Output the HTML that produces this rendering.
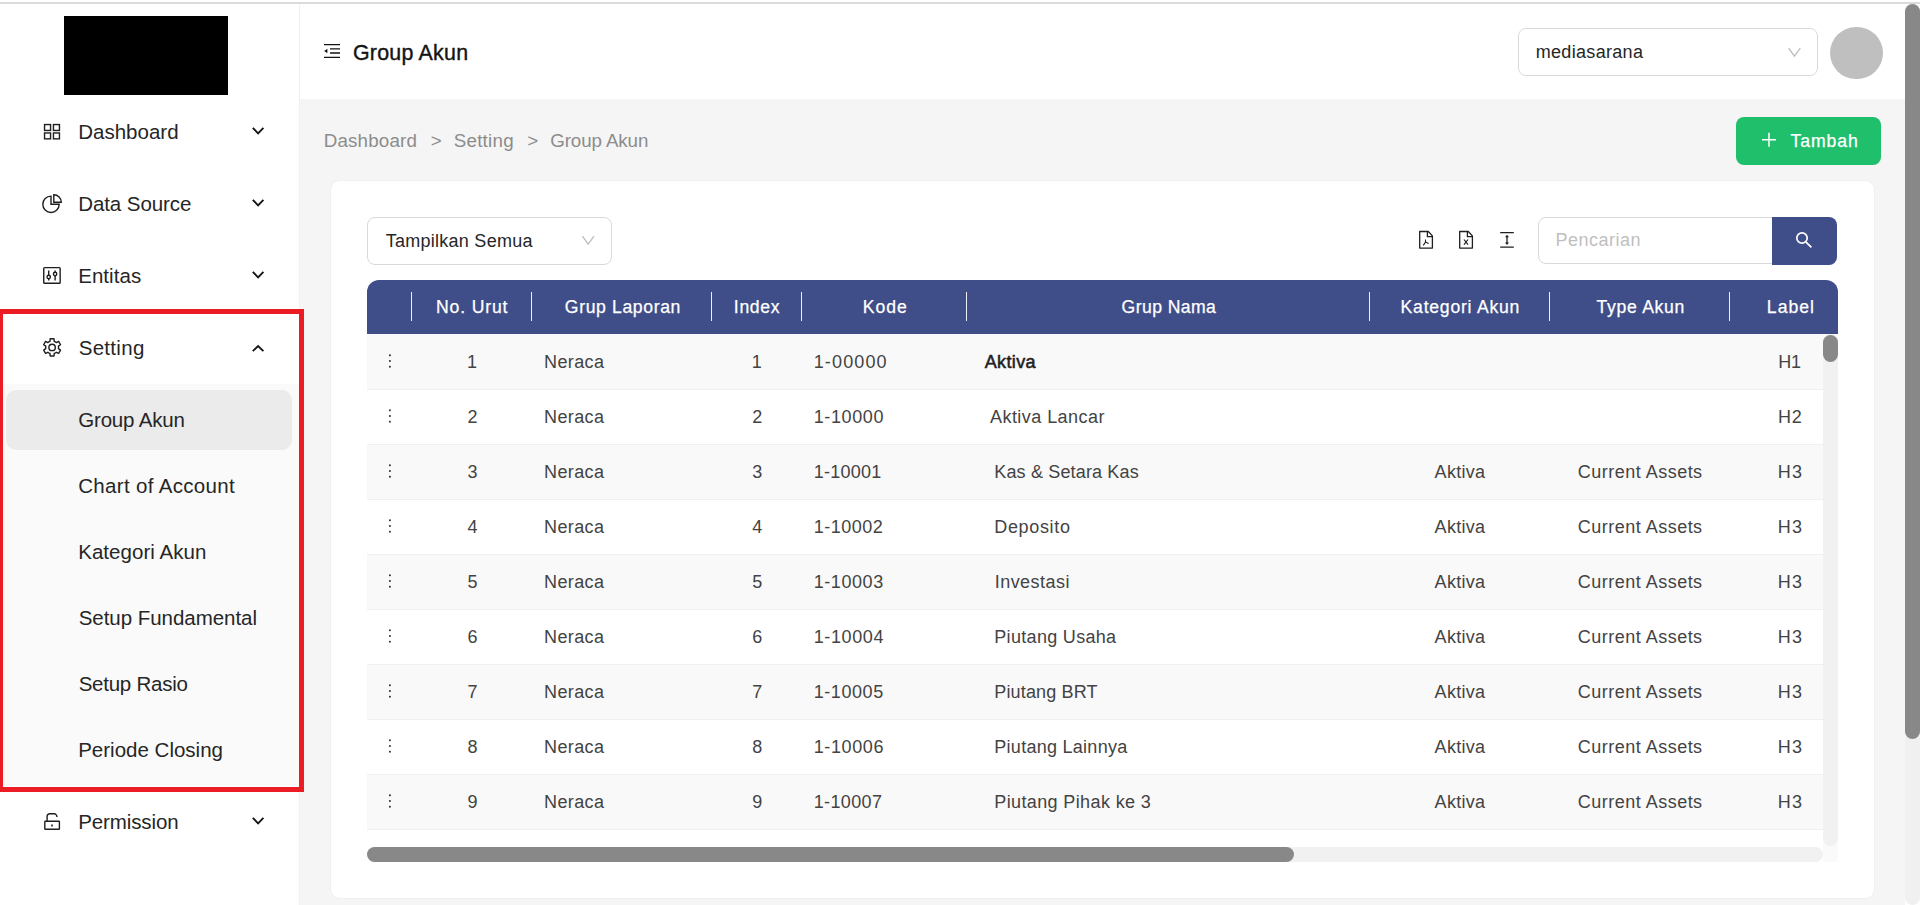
<!DOCTYPE html>
<html lang="id">
<head>
<meta charset="utf-8">
<title>Group Akun</title>
<style>
*{box-sizing:border-box;margin:0;padding:0}
html,body{width:1920px;height:905px;overflow:hidden}
body{background:#f5f5f5;font-family:"Liberation Sans",Arial,sans-serif;color:#1f1f1f;position:relative}
.abs{position:absolute}
.t{position:absolute;white-space:nowrap;line-height:1}
.c{transform:translateX(-50%)}
#topwhite{left:0;top:0;width:1920px;height:4px;background:#fff}
#topline{left:0;top:2px;width:1920px;height:2px;background:#dadcdc}
#sidebar{left:0;top:4px;width:300px;height:901px;background:#fff;border-right:1px solid #f0f0f0}
#header{left:300px;top:4px;width:1605px;height:95px;background:#fff}
#pscrollbg{left:1905px;top:4px;width:15px;height:901px;background:#fff}
#pscroll{left:1905px;top:4px;width:15px;height:901px;background:#f0f0f0;border-radius:7.5px}
#pthumb{left:1905px;top:4px;width:15px;height:735px;background:#888;border-radius:8px}
#logo{left:64px;top:16px;width:164px;height:78.6px;background:#000}
.mi{font-size:20px;color:#1f1f1f;left:78px}
#submenu{left:0;top:384px;width:299px;height:402px;background:#fafafa}
#active{left:6px;top:390px;width:286px;height:60px;background:#ebebeb;border-radius:10px}
#redbox{left:-2px;top:309px;width:306px;height:483px;border:5px solid #ec1c24}
svg{position:absolute;overflow:visible}
#card{left:330px;top:180px;width:1545px;height:719px;background:#fff;border-radius:10px;border:1px solid #f0f0f0}
</style>
</head>
<body>
<div class="abs" id="topwhite"></div>
<div class="abs" id="topline"></div>
<div class="abs" id="sidebar"></div>
<div class="abs" id="header"></div>
<div class="abs" id="pscrollbg"></div>
<div class="abs" id="pscroll"></div>
<div class="abs" id="pthumb"></div>
<div class="abs" id="logo"></div>
<div class="abs" id="submenu"></div>
<div class="abs" id="active"></div>
<svg class="abs" style="left:0;top:0" width="1920" height="905" viewBox="0 0 1920 905" fill="none" stroke="#1f1f1f" stroke-width="1.4"><rect x="44.55" y="124.55" width="6" height="5.9"/><rect x="53.45" y="124.55" width="6" height="5.9"/><rect x="44.55" y="132.95" width="6" height="5.9"/><rect x="53.45" y="132.95" width="6" height="5.9"/><path d="M51.0 196.1 A8.2 8.2 0 1 0 59.2 204.3 H51.0 Z"/><path d="M53.8 194.7 V202.2 H61.3 A7.5 7.5 0 0 0 53.8 194.7 Z"/><rect x="43.75" y="267.6" width="16.4" height="15.7" rx="0.8"/><path d="M48.7 270.4 V275.2 M48.7 278.8 V280.6 M55.1 270.4 V272.2 M55.1 275.8 V280.6"/><circle cx="48.7" cy="277" r="1.7"/><circle cx="55.1" cy="274" r="1.7"/><path d="M54.20 341.30L54.02 338.76L50.18 338.76L50.00 341.30A6.45 6.45 0 0 0 47.87 342.53L45.58 341.42L43.66 344.74L45.77 346.17A6.45 6.45 0 0 0 45.77 348.63L43.66 350.06L45.58 353.38L47.87 352.27A6.45 6.45 0 0 0 50.00 353.50L50.18 356.04L54.02 356.04L54.20 353.50A6.45 6.45 0 0 0 56.33 352.27L58.62 353.38L60.54 350.06L58.43 348.63A6.45 6.45 0 0 0 58.43 346.17L60.54 344.74L58.62 341.42L56.33 342.53A6.45 6.45 0 0 0 54.20 341.30Z" stroke-linejoin="round"/><circle cx="52.1" cy="347.4" r="3.2"/><rect x="44.8" y="821.3" width="14.6" height="8" rx="0.6"/><path d="M47.1 821.3 V816.6 A2.8 2.8 0 0 1 49.9 813.8 H54.1 A2.8 2.8 0 0 1 56.9 816.6 V817"/><path d="M52 824.6 V826.4" stroke-width="1.6"/></svg><svg class="abs" style="left:0;top:0" width="1920" height="905" viewBox="0 0 1920 905" fill="none" stroke="#141414" stroke-width="1.9"><path d="M252.8 127.85 L258.1 133.3 L263.4 127.85"/><path d="M252.8 199.85 L258.1 205.3 L263.4 199.85"/><path d="M252.8 271.85 L258.1 277.3 L263.4 271.85"/><path d="M252.8 817.85 L258.1 823.3 L263.4 817.85"/><path d="M252.8 351.1 L258.1 346 L263.4 351.1"/></svg>
<div class="abs" id="card"></div>
<svg class="abs" style="left:0;top:0" width="1920" height="905" viewBox="0 0 1920 905" ><path d="M324 44.55 H340 M330 48.8 H340 M330 53 H340 M324 57.35 H340" fill="none" stroke="#141414" stroke-width="1.35"/><path d="M324.2 51 L327.4 48.7 V53.3 Z" fill="#141414"/></svg>
<div class="abs" style="left:1518px;top:28px;width:300px;height:48px;border:1px solid #d9d9d9;border-radius:8px;background:#fff"></div>
<svg class="abs" style="left:0;top:0" width="1920" height="905" viewBox="0 0 1920 905" ><path d="M1788.6 48.2 L1794.4 56.2 L1800.3 48.2" fill="none" stroke="#bdbdbd" stroke-width="1.3"/></svg>
<div class="abs" style="left:1830px;top:26.6px;width:52.6px;height:52.6px;border-radius:50%;background:#bfbfbf"></div>
<div class="abs" style="left:1736px;top:117px;width:145px;height:48px;border-radius:8px;background:#20bf6b"></div>
<svg class="abs" style="left:0;top:0" width="1920" height="905" viewBox="0 0 1920 905" ><path d="M1762 139.8 H1776 M1769 132.8 V146.8" fill="none" stroke="#fff" stroke-width="1.5"/></svg>
<div class="abs" style="left:367px;top:217px;width:245px;height:48px;border:1px solid #d9d9d9;border-radius:8px;background:#fff"></div>
<svg class="abs" style="left:0;top:0" width="1920" height="905" viewBox="0 0 1920 905" ><path d="M582.4 236.2 L588.2 244.2 L594.1 236.2" fill="none" stroke="#bdbdbd" stroke-width="1.3"/></svg>
<svg class="abs" style="left:0;top:0" width="1920" height="905" viewBox="0 0 1920 905" fill="none" stroke="#1f1f1f" stroke-width="1.3"><path d="M1419.7 231.5 H1428.3 L1432.4 235.9 V248.1 H1419.7 Z" stroke-linejoin="round"/><path d="M1427.4 231.5 V236.7 H1432.4"/><path d="M1459.7 231.5 H1468.3 L1472.4 235.9 V248.1 H1459.7 Z" stroke-linejoin="round"/><path d="M1467.4 231.5 V236.7 H1472.4"/><path d="M1425.5 239.6 V242 L1423.3 245.4 M1425.5 242 L1428.6 243.4" stroke-width="1.1"/><path d="M1464 239.5 L1468 244.6 M1468 239.5 L1464 244.6" stroke-width="1.2"/><path d="M1500.2 232.6 H1513.8 M1500.2 247.2 H1513.8 M1507 236.5 V243.5"/><path d="M1507 234.8 L1509 237.3 H1505 Z M1507 245 L1509 242.5 H1505 Z" fill="#1f1f1f" stroke="none"/></svg>
<div class="abs" style="left:1538px;top:217px;width:236px;height:47px;border:1px solid #d9d9d9;border-radius:8px 0 0 8px;background:#fff"></div>
<div class="abs" style="left:1772px;top:217px;width:65px;height:48px;border-radius:0 8px 8px 0;background:#3f4e89"></div>
<svg class="abs" style="left:0;top:0" width="1920" height="905" viewBox="0 0 1920 905" ><circle cx="1802" cy="238" r="5.2" fill="none" stroke="#fff" stroke-width="1.7"/><path d="M1805.8 241.8 L1811.4 247.4" stroke="#fff" stroke-width="1.8"/></svg>
<div class="abs" style="left:367px;top:280px;width:1471px;height:54px;border-radius:12px 12px 0 0;background:#3f4e89"></div>
<div class="abs" style="left:411px;top:292.4px;width:1px;height:28.3px;background:#eef0f6"></div>
<div class="abs" style="left:531px;top:292.4px;width:1px;height:28.3px;background:#eef0f6"></div>
<div class="abs" style="left:711px;top:292.4px;width:1px;height:28.3px;background:#eef0f6"></div>
<div class="abs" style="left:801px;top:292.4px;width:1px;height:28.3px;background:#eef0f6"></div>
<div class="abs" style="left:966px;top:292.4px;width:1px;height:28.3px;background:#eef0f6"></div>
<div class="abs" style="left:1369px;top:292.4px;width:1px;height:28.3px;background:#eef0f6"></div>
<div class="abs" style="left:1549px;top:292.4px;width:1px;height:28.3px;background:#eef0f6"></div>
<div class="abs" style="left:1729px;top:292.4px;width:1px;height:28.3px;background:#eef0f6"></div>
<div class="abs" style="left:367px;top:334px;width:1456px;height:2px;background:#f9f9f9"></div>
<div class="abs" style="left:367px;top:335px;width:1456px;height:55px;background:#f9f9f9;border-bottom:1px solid #f0f0f0"></div>
<div class="abs" style="left:367px;top:390px;width:1456px;height:55px;background:#fff;border-bottom:1px solid #f0f0f0"></div>
<div class="abs" style="left:367px;top:445px;width:1456px;height:55px;background:#f9f9f9;border-bottom:1px solid #f0f0f0"></div>
<div class="abs" style="left:367px;top:500px;width:1456px;height:55px;background:#fff;border-bottom:1px solid #f0f0f0"></div>
<div class="abs" style="left:367px;top:555px;width:1456px;height:55px;background:#f9f9f9;border-bottom:1px solid #f0f0f0"></div>
<div class="abs" style="left:367px;top:610px;width:1456px;height:55px;background:#fff;border-bottom:1px solid #f0f0f0"></div>
<div class="abs" style="left:367px;top:665px;width:1456px;height:55px;background:#f9f9f9;border-bottom:1px solid #f0f0f0"></div>
<div class="abs" style="left:367px;top:720px;width:1456px;height:55px;background:#fff;border-bottom:1px solid #f0f0f0"></div>
<div class="abs" style="left:367px;top:775px;width:1456px;height:55px;background:#f9f9f9;border-bottom:1px solid #f0f0f0"></div>
<svg class="abs" style="left:0;top:0" width="1920" height="905" viewBox="0 0 1920 905" fill="#262626"><rect x="389.04999999999995" y="354.45" width="1.7" height="1.7"/><rect x="389.04999999999995" y="360.15" width="1.7" height="1.7"/><rect x="389.04999999999995" y="365.84999999999997" width="1.7" height="1.7"/><rect x="389.04999999999995" y="409.45" width="1.7" height="1.7"/><rect x="389.04999999999995" y="415.15" width="1.7" height="1.7"/><rect x="389.04999999999995" y="420.84999999999997" width="1.7" height="1.7"/><rect x="389.04999999999995" y="464.45" width="1.7" height="1.7"/><rect x="389.04999999999995" y="470.15" width="1.7" height="1.7"/><rect x="389.04999999999995" y="475.84999999999997" width="1.7" height="1.7"/><rect x="389.04999999999995" y="519.4499999999999" width="1.7" height="1.7"/><rect x="389.04999999999995" y="525.15" width="1.7" height="1.7"/><rect x="389.04999999999995" y="530.85" width="1.7" height="1.7"/><rect x="389.04999999999995" y="574.4499999999999" width="1.7" height="1.7"/><rect x="389.04999999999995" y="580.15" width="1.7" height="1.7"/><rect x="389.04999999999995" y="585.85" width="1.7" height="1.7"/><rect x="389.04999999999995" y="629.4499999999999" width="1.7" height="1.7"/><rect x="389.04999999999995" y="635.15" width="1.7" height="1.7"/><rect x="389.04999999999995" y="640.85" width="1.7" height="1.7"/><rect x="389.04999999999995" y="684.4499999999999" width="1.7" height="1.7"/><rect x="389.04999999999995" y="690.15" width="1.7" height="1.7"/><rect x="389.04999999999995" y="695.85" width="1.7" height="1.7"/><rect x="389.04999999999995" y="739.4499999999999" width="1.7" height="1.7"/><rect x="389.04999999999995" y="745.15" width="1.7" height="1.7"/><rect x="389.04999999999995" y="750.85" width="1.7" height="1.7"/><rect x="389.04999999999995" y="794.4499999999999" width="1.7" height="1.7"/><rect x="389.04999999999995" y="800.15" width="1.7" height="1.7"/><rect x="389.04999999999995" y="805.85" width="1.7" height="1.7"/></svg>
<div class="abs" style="left:1823px;top:334px;width:15px;height:528px;background:#fafafa"></div>
<div class="abs" style="left:1823px;top:334px;width:15px;height:512px;background:#f1f1f1;border-radius:8px"></div>
<div class="abs" style="left:1823px;top:335px;width:15px;height:27px;background:#888;border-radius:8px"></div>
<div class="abs" style="left:367px;top:847px;width:1456px;height:15px;background:#f1f1f1;border-radius:8px"></div>
<div class="abs" style="left:367px;top:847px;width:927px;height:15px;background:#888;border-radius:8px"></div>
<div class="t" style="left:78.20px;top:122.00px;font-size:20.5px;color:#262626;letter-spacing:0.014px;">Dashboard</div>
<div class="t" style="left:78.20px;top:194.00px;font-size:20.5px;color:#262626;letter-spacing:-0.080px;">Data Source</div>
<div class="t" style="left:78.20px;top:266.00px;font-size:20.5px;color:#262626;letter-spacing:0.055px;">Entitas</div>
<div class="t" style="left:78.70px;top:338.00px;font-size:20.5px;color:#262626;letter-spacing:0.305px;">Setting</div>
<div class="t" style="left:78.20px;top:410.00px;font-size:20.5px;color:#262626;letter-spacing:-0.166px;">Group Akun</div>
<div class="t" style="left:78.20px;top:476.00px;font-size:20.5px;color:#262626;letter-spacing:0.334px;">Chart of Account</div>
<div class="t" style="left:78.20px;top:542.00px;font-size:20.5px;color:#262626;letter-spacing:0.052px;">Kategori Akun</div>
<div class="t" style="left:78.70px;top:608.00px;font-size:20.5px;color:#262626;letter-spacing:-0.039px;">Setup Fundamental</div>
<div class="t" style="left:78.70px;top:674.00px;font-size:20.5px;color:#262626;letter-spacing:-0.248px;">Setup Rasio</div>
<div class="t" style="left:78.20px;top:740.00px;font-size:20.5px;color:#262626;letter-spacing:0.006px;">Periode Closing</div>
<div class="t" style="left:78.20px;top:812.00px;font-size:20.5px;color:#262626;letter-spacing:-0.110px;">Permission</div>
<div class="t" style="left:352.99px;top:43.00px;font-size:21.4px;color:#141414;letter-spacing:0.230px;-webkit-text-stroke:0.38px #141414;">Group Akun</div>
<div class="t" style="left:1535.70px;top:43.10px;font-size:18px;color:#262626;letter-spacing:0.320px;">mediasarana</div>
<div class="t" style="left:323.70px;top:132.40px;font-size:18.75px;color:#8c8c8c;letter-spacing:0.181px;">Dashboard</div>
<div class="t" style="left:430.70px;top:132.40px;font-size:18.75px;color:#8c8c8c;">&gt;</div>
<div class="t" style="left:453.70px;top:132.40px;font-size:18.75px;color:#8c8c8c;letter-spacing:0.259px;">Setting</div>
<div class="t" style="left:527.20px;top:132.40px;font-size:18.75px;color:#8c8c8c;">&gt;</div>
<div class="t" style="left:550.20px;top:132.40px;font-size:18.75px;color:#8c8c8c;letter-spacing:-0.098px;">Group Akun</div>
<div class="t" style="left:1790.53px;top:132.80px;font-size:17.6px;color:#fff;letter-spacing:0.949px;-webkit-text-stroke:0.25px #fff;">Tambah</div>
<div class="t" style="left:385.70px;top:231.80px;font-size:18px;color:#262626;letter-spacing:0.264px;">Tampilkan Semua</div>
<div class="t" style="left:1555.45px;top:230.90px;font-size:18px;color:#bfbfbf;letter-spacing:0.495px;">Pencarian</div>
<div class="t" style="left:436.07px;top:298.70px;font-size:17.6px;color:#fff;letter-spacing:0.841px;-webkit-text-stroke:0.25px #fff;">No. Urut</div>
<div class="t" style="left:564.83px;top:298.70px;font-size:17.6px;color:#fff;letter-spacing:0.633px;-webkit-text-stroke:0.25px #fff;">Grup Laporan</div>
<div class="t" style="left:733.83px;top:298.70px;font-size:17.6px;color:#fff;letter-spacing:0.677px;-webkit-text-stroke:0.25px #fff;">Index</div>
<div class="t" style="left:862.73px;top:298.70px;font-size:17.6px;color:#fff;letter-spacing:1.015px;-webkit-text-stroke:0.25px #fff;">Kode</div>
<div class="t" style="left:1121.58px;top:298.70px;font-size:17.6px;color:#fff;letter-spacing:0.419px;-webkit-text-stroke:0.25px #fff;">Grup Nama</div>
<div class="t" style="left:1400.58px;top:298.70px;font-size:17.6px;color:#fff;letter-spacing:0.772px;-webkit-text-stroke:0.25px #fff;">Kategori Akun</div>
<div class="t" style="left:1596.58px;top:298.70px;font-size:17.6px;color:#fff;letter-spacing:0.707px;-webkit-text-stroke:0.25px #fff;">Type Akun</div>
<div class="t" style="left:1766.83px;top:298.70px;font-size:17.6px;color:#fff;letter-spacing:1.028px;-webkit-text-stroke:0.25px #fff;">Label</div>
<div class="t" style="left:466.90px;top:353.10px;font-size:18px;color:#434343;">1</div>
<div class="t" style="left:544.10px;top:353.10px;font-size:18px;color:#434343;letter-spacing:0.357px;">Neraca</div>
<div class="t" style="left:751.80px;top:353.10px;font-size:18px;color:#434343;">1</div>
<div class="t" style="left:813.70px;top:353.10px;font-size:18px;color:#434343;letter-spacing:1.142px;">1-00000</div>
<div class="t" style="left:984.77px;top:353.10px;font-size:18px;color:#1f1f1f;letter-spacing:0.349px;-webkit-text-stroke:0.55px #1f1f1f;">Aktiva</div>
<div class="t" style="left:1778.33px;top:353.10px;font-size:18px;color:#434343;letter-spacing:-0.450px;">H1</div>
<div class="t" style="left:467.40px;top:408.10px;font-size:18px;color:#434343;">2</div>
<div class="t" style="left:544.10px;top:408.10px;font-size:18px;color:#434343;letter-spacing:0.357px;">Neraca</div>
<div class="t" style="left:752.30px;top:408.10px;font-size:18px;color:#434343;">2</div>
<div class="t" style="left:813.70px;top:408.10px;font-size:18px;color:#434343;letter-spacing:0.617px;">1-10000</div>
<div class="t" style="left:990.00px;top:408.10px;font-size:18px;color:#434343;letter-spacing:0.445px;">Aktiva Lancar</div>
<div class="t" style="left:1778.00px;top:408.10px;font-size:18px;color:#434343;letter-spacing:0.701px;">H2</div>
<div class="t" style="left:467.40px;top:463.10px;font-size:18px;color:#434343;">3</div>
<div class="t" style="left:544.10px;top:463.10px;font-size:18px;color:#434343;letter-spacing:0.357px;">Neraca</div>
<div class="t" style="left:752.30px;top:463.10px;font-size:18px;color:#434343;">3</div>
<div class="t" style="left:813.70px;top:463.10px;font-size:18px;color:#434343;letter-spacing:0.242px;">1-10001</div>
<div class="t" style="left:994.30px;top:463.10px;font-size:18px;color:#434343;letter-spacing:0.155px;">Kas &amp; Setara Kas</div>
<div class="t" style="left:1434.60px;top:463.10px;font-size:18px;color:#434343;letter-spacing:0.299px;">Aktiva</div>
<div class="t" style="left:1577.80px;top:463.10px;font-size:18px;color:#434343;letter-spacing:0.482px;">Current Assets</div>
<div class="t" style="left:1777.70px;top:463.10px;font-size:18px;color:#434343;letter-spacing:1.201px;">H3</div>
<div class="t" style="left:467.40px;top:518.10px;font-size:18px;color:#434343;">4</div>
<div class="t" style="left:544.10px;top:518.10px;font-size:18px;color:#434343;letter-spacing:0.357px;">Neraca</div>
<div class="t" style="left:752.30px;top:518.10px;font-size:18px;color:#434343;">4</div>
<div class="t" style="left:813.70px;top:518.10px;font-size:18px;color:#434343;letter-spacing:0.509px;">1-10002</div>
<div class="t" style="left:994.30px;top:518.10px;font-size:18px;color:#434343;letter-spacing:0.653px;">Deposito</div>
<div class="t" style="left:1434.60px;top:518.10px;font-size:18px;color:#434343;letter-spacing:0.299px;">Aktiva</div>
<div class="t" style="left:1577.80px;top:518.10px;font-size:18px;color:#434343;letter-spacing:0.482px;">Current Assets</div>
<div class="t" style="left:1777.70px;top:518.10px;font-size:18px;color:#434343;letter-spacing:1.201px;">H3</div>
<div class="t" style="left:467.40px;top:573.10px;font-size:18px;color:#434343;">5</div>
<div class="t" style="left:544.10px;top:573.10px;font-size:18px;color:#434343;letter-spacing:0.357px;">Neraca</div>
<div class="t" style="left:752.30px;top:573.10px;font-size:18px;color:#434343;">5</div>
<div class="t" style="left:813.70px;top:573.10px;font-size:18px;color:#434343;letter-spacing:0.575px;">1-10003</div>
<div class="t" style="left:994.70px;top:573.10px;font-size:18px;color:#434343;letter-spacing:0.471px;">Investasi</div>
<div class="t" style="left:1434.60px;top:573.10px;font-size:18px;color:#434343;letter-spacing:0.299px;">Aktiva</div>
<div class="t" style="left:1577.80px;top:573.10px;font-size:18px;color:#434343;letter-spacing:0.482px;">Current Assets</div>
<div class="t" style="left:1777.70px;top:573.10px;font-size:18px;color:#434343;letter-spacing:1.201px;">H3</div>
<div class="t" style="left:467.40px;top:628.10px;font-size:18px;color:#434343;">6</div>
<div class="t" style="left:544.10px;top:628.10px;font-size:18px;color:#434343;letter-spacing:0.357px;">Neraca</div>
<div class="t" style="left:752.30px;top:628.10px;font-size:18px;color:#434343;">6</div>
<div class="t" style="left:813.70px;top:628.10px;font-size:18px;color:#434343;letter-spacing:0.625px;">1-10004</div>
<div class="t" style="left:994.30px;top:628.10px;font-size:18px;color:#434343;letter-spacing:0.311px;">Piutang Usaha</div>
<div class="t" style="left:1434.60px;top:628.10px;font-size:18px;color:#434343;letter-spacing:0.299px;">Aktiva</div>
<div class="t" style="left:1577.80px;top:628.10px;font-size:18px;color:#434343;letter-spacing:0.482px;">Current Assets</div>
<div class="t" style="left:1777.70px;top:628.10px;font-size:18px;color:#434343;letter-spacing:1.201px;">H3</div>
<div class="t" style="left:467.40px;top:683.10px;font-size:18px;color:#434343;">7</div>
<div class="t" style="left:544.10px;top:683.10px;font-size:18px;color:#434343;letter-spacing:0.357px;">Neraca</div>
<div class="t" style="left:752.30px;top:683.10px;font-size:18px;color:#434343;">7</div>
<div class="t" style="left:813.70px;top:683.10px;font-size:18px;color:#434343;letter-spacing:0.575px;">1-10005</div>
<div class="t" style="left:994.30px;top:683.10px;font-size:18px;color:#434343;letter-spacing:0.147px;">Piutang BRT</div>
<div class="t" style="left:1434.60px;top:683.10px;font-size:18px;color:#434343;letter-spacing:0.299px;">Aktiva</div>
<div class="t" style="left:1577.80px;top:683.10px;font-size:18px;color:#434343;letter-spacing:0.482px;">Current Assets</div>
<div class="t" style="left:1777.70px;top:683.10px;font-size:18px;color:#434343;letter-spacing:1.201px;">H3</div>
<div class="t" style="left:467.40px;top:738.10px;font-size:18px;color:#434343;">8</div>
<div class="t" style="left:544.10px;top:738.10px;font-size:18px;color:#434343;letter-spacing:0.357px;">Neraca</div>
<div class="t" style="left:752.30px;top:738.10px;font-size:18px;color:#434343;">8</div>
<div class="t" style="left:813.70px;top:738.10px;font-size:18px;color:#434343;letter-spacing:0.609px;">1-10006</div>
<div class="t" style="left:994.30px;top:738.10px;font-size:18px;color:#434343;letter-spacing:0.272px;">Piutang Lainnya</div>
<div class="t" style="left:1434.60px;top:738.10px;font-size:18px;color:#434343;letter-spacing:0.299px;">Aktiva</div>
<div class="t" style="left:1577.80px;top:738.10px;font-size:18px;color:#434343;letter-spacing:0.482px;">Current Assets</div>
<div class="t" style="left:1777.70px;top:738.10px;font-size:18px;color:#434343;letter-spacing:1.201px;">H3</div>
<div class="t" style="left:467.40px;top:793.10px;font-size:18px;color:#434343;">9</div>
<div class="t" style="left:544.10px;top:793.10px;font-size:18px;color:#434343;letter-spacing:0.357px;">Neraca</div>
<div class="t" style="left:752.30px;top:793.10px;font-size:18px;color:#434343;">9</div>
<div class="t" style="left:813.70px;top:793.10px;font-size:18px;color:#434343;letter-spacing:0.359px;">1-10007</div>
<div class="t" style="left:994.30px;top:793.10px;font-size:18px;color:#434343;letter-spacing:0.377px;">Piutang Pihak ke 3</div>
<div class="t" style="left:1434.60px;top:793.10px;font-size:18px;color:#434343;letter-spacing:0.299px;">Aktiva</div>
<div class="t" style="left:1577.80px;top:793.10px;font-size:18px;color:#434343;letter-spacing:0.482px;">Current Assets</div>
<div class="t" style="left:1777.70px;top:793.10px;font-size:18px;color:#434343;letter-spacing:1.201px;">H3</div>
<div class="abs" id="redbox"></div>
</body>
</html>
